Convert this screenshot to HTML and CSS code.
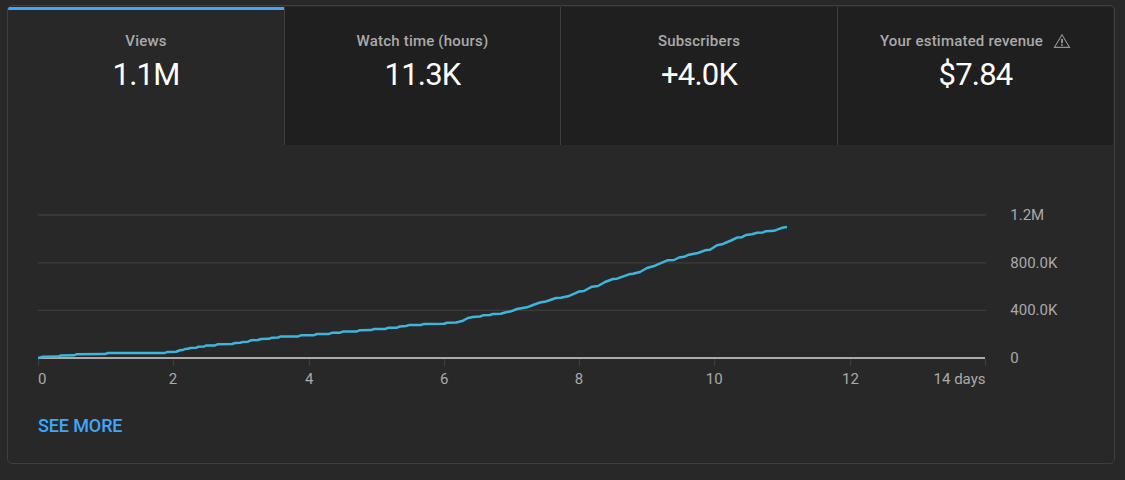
FILE: index.html
```html
<!DOCTYPE html>
<html lang="en">
<head>
<meta charset="utf-8">
<title>Video analytics</title>
<link rel="stylesheet" href="styles.css">
</head>
<body>
<main class="card">
  <nav class="tabs">
    <div class="tab active">
      <div class="label">Views</div>
      <div class="value">1.1M</div>
    </div>
    <div class="tab">
      <div class="label">Watch time (hours)</div>
      <div class="value">11.3K</div>
    </div>
    <div class="tab">
      <div class="label">Subscribers</div>
      <div class="value">+4.0K</div>
    </div>
    <div class="tab">
      <div class="label">Your estimated revenue
        <svg class="warning" width="18" height="16" viewBox="0 0 18 16"><path d="M9 1.8 1.4 14.4H16.6Z" fill="none" stroke="#929292" stroke-width="1.1"/><path d="M9 6v4.3M9 11.3v1.5" stroke="#aaa" stroke-width="1.6"/></svg>
      </div>
      <div class="value">$7.84</div>
    </div>
  </nav>
  <svg class="chart" width="1046" height="190" viewBox="38 205 1046 190">
    <g class="grid">
      <path d="M38 215H986M38 262.8H986M38 310.4H986"/>
      <path d="M38.5 359v7M173.5 359v7M309.5 359v7M444.5 359v7M579.5 359v7M714.5 359v7M850.5 359v7M985.5 359v7"/>
    </g>
    <path class="axis" d="M38 358H985"/>
    <path class="series" d="M38 358 43 356.8 58 356.6 61 355.4 74 355.3 77 354.2 105 354.1 108 353 165 353 167 352 176 351.7 180 350.3 183 350 185 349 188 348.8 190 348 196 347.8 198 346.8 204 346.6 206 345.5 215 345.4 218 344.2 232 344 235 343 240 342.8 243 341.9 248 341.7 251 340.3 258 340 261 339 269 338.8 272 337.7 278 337.5 281 336.4 298 336.4 301 335.3 314 335.2 317 334 329 333.9 332 332.8 340 332.7 343 331.6 357 331.4 360 330.2 371 330.1 374 329 385 329 388 327.8 397 327.7 400 326.5 406 326 409 325.1 421 325 424 323.9 444 323.8 447 322.8 456 322.5 459 321.8 463 320.7 468 318 473 317 480 316.5 483 315.3 490 315 493 314 501 313.8 505 312.5 511 311.3 517 309 527 307.3 533 305 540 302.5 546 301.4 548 300.8 556 298 561 297.7 568 296.3 575 293.3 579 291.5 584 291 592 286.7 598 286 605 282 613 279 617 278.7 629 274.3 633 273.7 640 272 647 268 655 265.7 662 262.7 668 260.2 674 260 679 257.5 684 256.8 689 254.7 698 253 705 250.3 710 249.8 717 245.3 722 244.3 731 240.5 737 237.6 742 237.2 746 235 752 234.3 757 232.7 763 232.4 766 231.2 774 230.8 782 227.8 787 227"/>
    <g class="ticks">
      <text x="38" y="384">0</text>
      <text class="mid" x="173" y="384">2</text>
      <text class="mid" x="309.3" y="384">4</text>
      <text class="mid" x="444.3" y="384">6</text>
      <text class="mid" x="579" y="384">8</text>
      <text class="mid" x="714.3" y="384">10</text>
      <text class="mid" x="850.5" y="384">12</text>
      <text class="end" x="985.5" y="384">14 days</text>
      <text x="1010.3" y="220">1.2M</text>
      <text x="1010.3" y="268">800.0K</text>
      <text x="1010.3" y="315">400.0K</text>
      <text x="1010.3" y="363">0</text>
    </g>
  </svg>
  <a class="more">SEE MORE</a>
</main>
</body>
</html>
```
FILE: styles.css
```css
* { box-sizing: border-box; }
body {
  margin: 0;
  height: 480px;
  padding: 5px 10px 0 7px;
  overflow: hidden;
  background: #282828;
  font-family: Roboto, "Liberation Sans", sans-serif;
  color: #aaa;
}
.card {
  width: 1108px;
  height: 459px;
  border: 1px solid #3f3f3f;
  border-radius: 5px;
  padding-top: 1px;
  overflow: hidden;
}
.tabs {
  display: grid;
  grid-template-columns: 276px 276px 277px 276px;
  height: 138px;
}
.tab {
  padding-top: 25px;
  background: #1f1f1f;
  border-left: 1px solid #3f3f3f;
  text-align: center;
}
.tab.active {
  padding-top: 22px;
  background: #282828;
  border-left: 0;
  border-top: 3px solid #3ea6ff;
}
.label {
  display: flex;
  justify-content: center;
  align-items: center;
  height: 18px;
  font-size: 15px;
  font-weight: 500;
  line-height: 18px;
  letter-spacing: 0.2px;
  white-space: nowrap;
}
.warning { margin-left: 10px; }
.value {
  margin-top: 7px;
  font-size: 31px;
  line-height: 36px;
  letter-spacing: -0.8px;
  color: #fff;
}
.chart {
  display: block;
  margin: 60px 0 0 30px;
}
.grid path { fill: none; stroke: #3d3d3d; stroke-width: 1.3; }
.axis { stroke: #aaa; stroke-width: 2; }
.series {
  fill: none;
  stroke: #3eb5dd;
  stroke-width: 2.5;
  stroke-linejoin: round;
}
.ticks { fill: #aaa; font-size: 15px; }
.mid { text-anchor: middle; }
.end { text-anchor: end; }
.more {
  display: block;
  margin: 20px 0 0 30px;
  font-size: 18px;
  font-weight: 500;
  line-height: 22px;
  letter-spacing: -0.12px;
  color: #3ea6ff;
}
```
